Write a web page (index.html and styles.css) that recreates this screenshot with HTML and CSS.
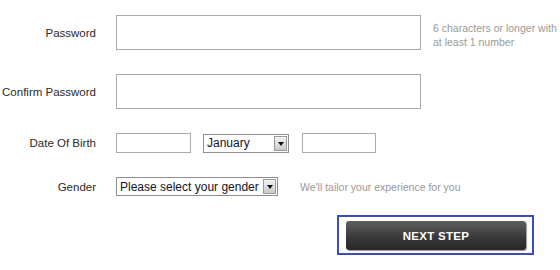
FILE: index.html
```html
<!DOCTYPE html>
<html lang="en">
<head>
    <meta charset="UTF-8">
    <meta name="viewport" content="width=device-width, initial-scale=1.0">
    <title>Create Account</title>
    <link rel="stylesheet" href="styles.css">
</head>
<body>
    <form class="signup">
        <label class="label" for="password">Password</label>
        <div class="field">
            <input type="password" id="password" class="text-input wide">
            <div class="hint">6 characters or longer with<br>at least 1 number</div>
        </div>

        <label class="label" for="confirm">Confirm Password</label>
        <div class="field">
            <input type="password" id="confirm" class="text-input wide">
        </div>

        <label class="label" for="day">Date Of Birth</label>
        <div class="field field-small">
            <input type="text" id="day" class="text-input day">
            <div class="select month">
                <select id="month">
                    <option>January</option>
                    <option>February</option>
                    <option>March</option>
                    <option>April</option>
                    <option>May</option>
                    <option>June</option>
                    <option>July</option>
                    <option>August</option>
                    <option>September</option>
                    <option>October</option>
                    <option>November</option>
                    <option>December</option>
                </select>
                <span class="arrow"></span>
            </div>
            <input type="text" id="year" class="text-input year">
        </div>

        <label class="label" for="gender">Gender</label>
        <div class="field field-small">
            <div class="select gender">
                <select id="gender">
                    <option>Please select your gender</option>
                    <option>Male</option>
                    <option>Female</option>
                </select>
                <span class="arrow"></span>
            </div>
            <div class="hint hint-inline">We'll tailor your experience for you</div>
        </div>

        <div class="actions">
            <div class="focus-ring">
                <button type="submit" class="next-btn">NEXT STEP</button>
            </div>
        </div>
    </form>
</body>
</html>
```

FILE: styles.css
```css
body {
    margin: 0;
    background-color: #fff;
    font-family: "Liberation Sans", Arial, sans-serif;
    font-size: 12px;
    color: #333;
}
.signup {
    display: grid;
    grid-template-columns: 96px 1fr;
    column-gap: 20px;
    row-gap: 24px;
    padding-top: 15px;
}
.label {
    justify-self: end;
    align-self: center;
    white-space: nowrap;
    font-size: 11.5px;
    color: #2a2a2a;
}
.field {
    display: flex;
    align-items: flex-start;
    gap: 12px;
}
.field-small {
    align-items: center;
}
.text-input {
    box-sizing: border-box;
    border: 1px solid #ababab;
    background: #fff;
    margin: 0;
    padding: 2px 4px;
    font-family: inherit;
    font-size: 12px;
}
.wide {
    width: 305px;
    height: 35px;
}
.day {
    width: 75px;
    height: 20px;
}
.year {
    width: 74px;
    height: 20px;
    margin-left: 1px;
}
.hint {
    color: #999;
    font-size: 10.5px;
    line-height: 14px;
    padding-top: 6px;
    white-space: nowrap;
}
.hint-inline {
    padding-top: 0;
    margin-left: 10px;
}
.select {
    position: relative;
    box-sizing: border-box;
    height: 19px;
    border: 1px solid #8e8e8e;
    background: #fff;
}
.select select {
    appearance: none;
    -webkit-appearance: none;
    border: none;
    outline: none;
    background: transparent;
    width: 100%;
    height: 100%;
    margin: 0;
    padding: 0 16px 0 3px;
    font-family: "Liberation Sans", Arial, sans-serif;
    font-size: 12px;
    color: #14142a;
}
.month {
    width: 86px;
}
.gender {
    width: 162px;
}
.arrow {
    position: absolute;
    top: 1px;
    right: 1px;
    width: 13px;
    height: 15px;
    box-sizing: border-box;
    border: 1px solid #9a9a9a;
    background: linear-gradient(#f4f4f4, #c9c9c9);
    pointer-events: none;
}
.arrow::after {
    content: "";
    position: absolute;
    left: 3px;
    top: 5px;
    border-left: 3px solid transparent;
    border-right: 3px solid transparent;
    border-top: 4px solid #111;
}
.actions {
    grid-column: 2;
    padding-left: 221px;
    margin-top: -5px;
}
.focus-ring {
    display: inline-block;
    border: 2px solid #3c4cc0;
    padding: 4px 6px 3px 7px;
}
.next-btn {
    display: block;
    width: 180px;
    height: 29px;
    border: none;
    border-radius: 3px;
    background: linear-gradient(#5e5e5e, #3a3a3a 55%, #262626);
    color: #fff;
    font-family: "Liberation Sans", Arial, sans-serif;
    font-weight: bold;
    font-size: 11.5px;
    letter-spacing: 0.3px;
    cursor: pointer;
    box-shadow: 1px 1px 1px #999;
}
```
